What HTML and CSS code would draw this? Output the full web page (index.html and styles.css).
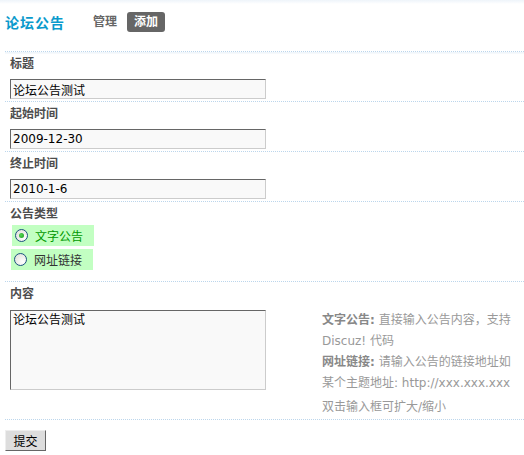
FILE: index.html
```html
<!DOCTYPE html>
<html lang="zh-CN">
<head>
  <meta charset="UTF-8">
  <title>论坛公告 - 添加</title>
  <link rel="stylesheet" href="styles.css">
</head>
<body>
  <div class="container">
    <!-- 标题栏 -->
    <div class="page-header">
      <h3 class="page-title">论坛公告</h3>
      <ul class="tabs">
        <li><a href="#">管理</a></li>
        <li class="current"><a href="#">添加</a></li>
      </ul>
    </div>

    <form class="announce-form" action="#">
      <div class="form-row">
        <div class="row-label">标题</div>
        <input class="txt" type="text" value="论坛公告测试">
      </div>

      <div class="form-row">
        <div class="row-label">起始时间</div>
        <input class="txt" type="text" value="2009-12-30">
      </div>

      <div class="form-row">
        <div class="row-label">终止时间</div>
        <input class="txt" type="text" value="2010-1-6">
      </div>

      <div class="form-row type-row">
        <div class="row-label">公告类型</div>
        <ul class="radio-list">
          <li class="radio-item checked">
            <label><input type="radio" name="type" checked> 文字公告</label>
          </li>
          <li class="radio-item shift">
            <label><input type="radio" name="type"> 网址链接</label>
          </li>
        </ul>
      </div>

      <div class="form-row content-row">
        <div class="row-label">内容</div>
        <div class="content-body">
          <textarea class="area">论坛公告测试</textarea>
          <div class="tips">
            <p><b>文字公告:</b> <span>直接输入公告内容，支持</span></p>
            <p>Discuz! 代码</p>
            <p><b>网址链接:</b> <span>请输入公告的链接地址如</span></p>
            <p>某个主题地址: http://xxx.xxx.xxx</p>
            <p class="tips-last">双击输入框可扩大/缩小</p>
          </div>
        </div>
      </div>

      <div class="submit-row">
        <button class="btn" type="submit">提交</button>
      </div>
    </form>
  </div>
</body>
</html>
```

FILE: styles.css
```css
* {
  margin: 0;
  padding: 0;
  box-sizing: border-box;
}

body {
  font: 12px "DejaVu Sans", "Noto Sans CJK SC", sans-serif;
  color: #333;
  background: #fff linear-gradient(#eef4fa, #fff 4px) no-repeat;
}

.container {
  margin-left: 5px;
}

/* 标题栏 */
.page-header {
  display: flex;
  align-items: center;
  height: 52px;
  padding-bottom: 7px;
  border-bottom: 1px dotted #bcd6ec;
  box-shadow: 0 1px 0 #f0f6fb, 0 2px 0 #f6f9fc;
}

.page-title {
  font-size: 14px;
  font-weight: bold;
  color: #0a9acc;
  width: 87px;
  letter-spacing: 1px;
}

.tabs {
  list-style: none;
  display: flex;
  align-items: center;
  gap: 9px;
}

.tabs a {
  display: block;
  color: #666;
  font-weight: bold;
  text-decoration: none;
  line-height: 20px;
  padding: 0 1px;
}

.tabs .current a {
  background: #666;
  color: #fff;
  border-radius: 3px;
  padding: 0 7px;
}

/* 表单行 */
.form-row {
  border-bottom: 1px dotted #bcd6ec;
  padding: 3px 0 2px 5px;
}

.row-label {
  font-weight: bold;
  color: #4d4d4d;
  line-height: 18px;
  margin-bottom: 6px;
}

.txt {
  display: block;
  width: 256px;
  height: 20px;
  padding: 0 2px;
  font: inherit;
  color: #000;
  background: #f9f9f9;
  border: 1px solid;
  border-color: #666 #ccc #ccc #666;
  outline: none;
}

/* 公告类型 */
.type-row {
  padding-bottom: 11px;
}

.type-row .row-label {
  margin-bottom: 2px;
}

.radio-list {
  list-style: none;
  display: flex;
  flex-direction: column;
  gap: 3px;
  padding-left: 2px;
}

.radio-item label {
  display: flex;
  align-items: center;
  gap: 7px;
  width: 82px;
  height: 21px;
  padding-left: 3px;
  background: #c2ffc2;
  color: #333;
}

.radio-item.shift label {
  margin-left: -1px;
}

.radio-item.checked label {
  color: #090;
}

.radio-item input {
  appearance: none;
  width: 13px;
  height: 13px;
  border: 1px solid #1c5180;
  border-radius: 50%;
  background: radial-gradient(circle at 70% 70%, #fff, #dcdcd5);
  display: grid;
  place-items: center;
  margin: 0;
}

.radio-item input:checked::after {
  content: "";
  width: 5px;
  height: 5px;
  border-radius: 50%;
  background: radial-gradient(circle at 40% 40%, #55d655, #1a9a1a);
}

/* 内容 */
.content-row {
  padding-bottom: 1px;
}

.content-row .row-label {
  margin-bottom: 7px;
}

.content-body {
  display: flex;
  align-items: flex-start;
  gap: 56px;
}

.area {
  width: 256px;
  height: 80px;
  padding: 0 2px;
  font: inherit;
  line-height: 18px;
  color: #000;
  background: #f9f9f9;
  border: 1px solid;
  border-color: #666 #ccc #ccc #666;
  resize: none;
  outline: none;
}

.tips {
  width: 198px;
  line-height: 21px;
  color: #999;
  white-space: nowrap;
}

.tips b {
  color: #888;
}

.tips-last {
  margin-top: 3px;
}

/* 提交按钮 */
.submit-row {
  padding-top: 10px;
}

.btn {
  width: 41px;
  height: 21px;
  font: inherit;
  color: #000;
  background: #ddd;
  border: 1px solid;
  border-color: #eee #666 #666 #eee;
}
```
